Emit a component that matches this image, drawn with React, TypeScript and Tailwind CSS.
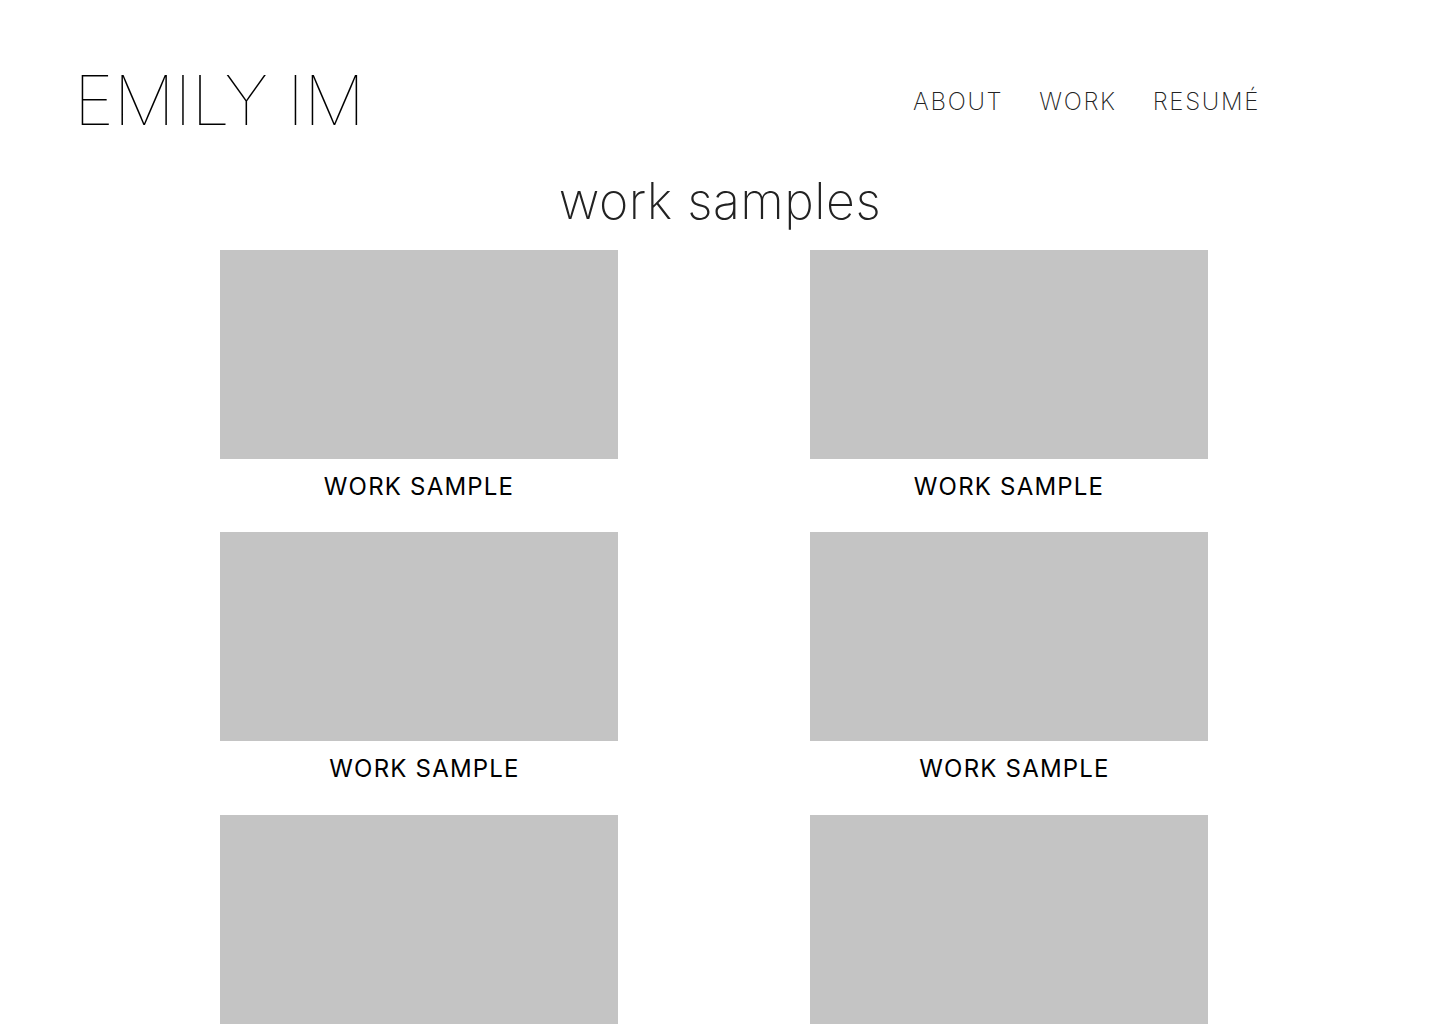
const samples = [
  { id: 1, shift: false },
  { id: 2, shift: false },
  { id: 3, shift: true },
  { id: 4, shift: true },
  { id: 5, shift: false },
  { id: 6, shift: false },
];

export default function App() {
  return (
    <div className="min-h-screen bg-white font-['Inter',sans-serif] text-black">
      {/* Header */}
      <header className="flex items-center pt-[62px] pl-[74px] pr-[180px]">
        <h1 className="text-[68px] leading-[76px] font-thin">EMILY IM</h1>
        <nav className="ml-auto flex gap-[36px] pt-[3px] text-[24px] font-extralight tracking-[0.07em] text-[#222]">
          <a href="#">ABOUT</a>
          <a href="#">WORK</a>
          <a href="#">RESUMÉ</a>
        </nav>
      </header>

      <h2 className="mt-[33px] mb-[19px] text-center text-[50px] leading-[60px] font-extralight tracking-[0.01em] text-[#222]">
        work samples
      </h2>

      <div className="grid grid-cols-[398px_398px] gap-x-[192px] pl-[220px]">
        {samples.map((s) => (
          <div key={s.id} className="flex flex-col">
            <div className="h-[209px] bg-[#c4c4c4]" />
            <p
              className={`pt-[14px] text-center text-[24px] leading-[28px] font-normal tracking-[0.05em] ${
                s.shift ? "h-[74px] pl-[11px]" : "h-[73px]"
              }`}
            >
              WORK SAMPLE
            </p>
          </div>
        ))}
      </div>
    </div>
  );
}
